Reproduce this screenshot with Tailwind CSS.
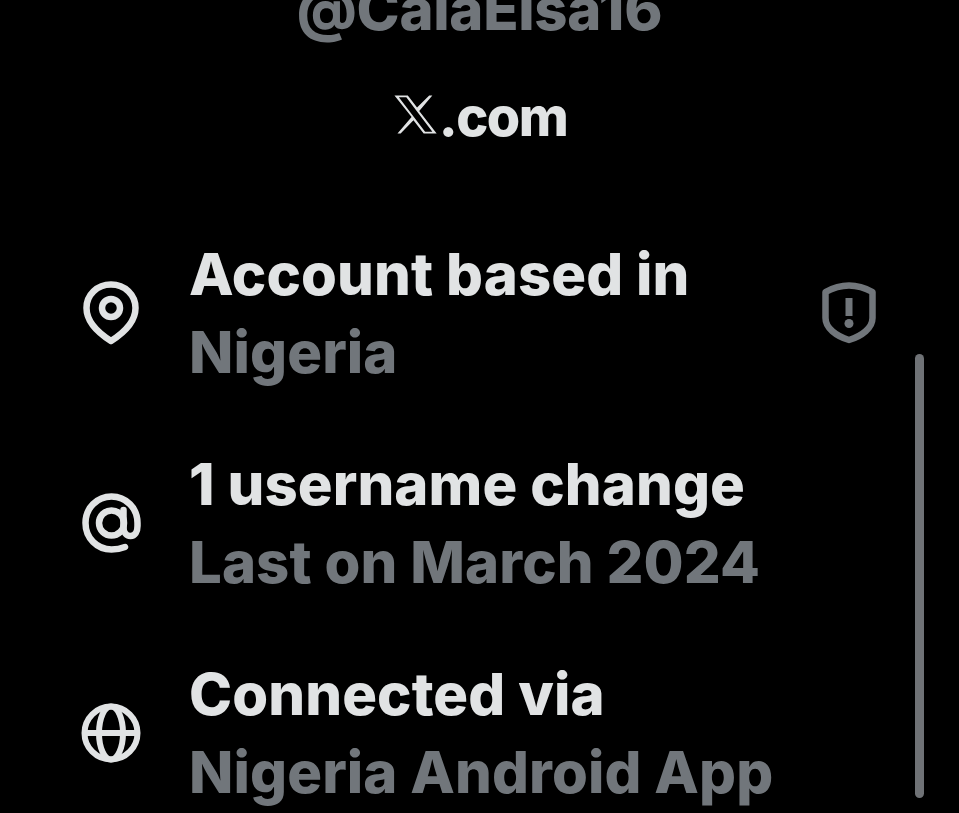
<!DOCTYPE html>
<html><head><meta charset="utf-8"><script src="https://cdn.jsdelivr.net/npm/@tailwindcss/browser@4"></script></head>
<body class="bg-black">
<main class="relative w-[959px] h-[813px] overflow-hidden bg-black font-['Inter','Liberation_Sans',sans-serif] font-extrabold antialiased">
  <header class="flex flex-col items-center -mt-[30px]">
    <div class="text-[#71767b] text-[58px] leading-[78px] tracking-[-0.3px]">@CalaElsa16</div>
    <div class="flex items-center mt-[38px] h-[60px] text-[#e1e3e4] text-[54px] tracking-[-1.5px]">
      <svg class="w-[47px] h-[47px] mt-[-3px]" viewBox="0 0 24 24" fill="currentColor" fill-rule="evenodd"><path d="M19 2.25h1.6l-6.7 7.95 8.9 11.55H16.170l-5.214-6.817L4.400 21.750H2.800l7.200-8.500L1.254 2.250H8.080l4.713 6.231zM3.500 3.200L16.900 20.800H20.600L7.300 3.200z"/></svg>
      <span>.com</span>
    </div>
  </header>
  <section class="flex flex-col gap-[54px] mt-[89px] pl-[80px] pr-[80px] text-[58px] leading-[78px] tracking-[0.1px]">
    <div class="flex items-center">
      <svg class="w-[62px] h-[70px] mr-[47px] shrink-0" viewBox="80 278 62 70" fill="none" stroke="#e1e3e4" stroke-width="6.5" stroke-linejoin="round"><path d="M111 284.5C97 284.5 86.5 295 86.5 308C86.5 323 100 334 111 341C122 334 135.500 323 135.500 308C135.500 295 125 284.500 111 284.500Z"/><circle cx="111" cy="308" r="9"/></svg>
      <div class="grow">
        <div class="text-[#e1e3e4]">Account based in</div>
        <div class="text-[#71767b]">Nigeria</div>
      </div>
      <svg class="w-[60px] h-[66px] shrink-0" viewBox="819 280 60 66" fill="none" stroke="#71767b" stroke-width="6.500" stroke-linejoin="round"><path d="M825.500 292C841 283.500 857 283.500 872.500 292V318C872.500 328 862 336 849 340C836 336 825.500 328 825.500 318Z"/><rect x="845.500" y="298" width="7" height="18" fill="#71767b" stroke="none"/><circle cx="849" cy="323.500" r="4.500" fill="#71767b" stroke="none"/></svg>
    </div>
    <div class="flex items-center">
      <svg class="w-[62px] h-[64px] mr-[47px] shrink-0" viewBox="80 491 62 64" fill="none" stroke="#e1e3e4" stroke-width="6.500" stroke-linecap="round"><path d="M125 547C120 549 116 549.500 111.500 549.500C97 549.500 85.500 538 85.500 523C85.500 508 97 496.500 111.500 496.500C126 496.500 137.500 508 137.500 523V526C137.500 532 135 536 130.500 536C126 536 123.500 532 123.500 527V510"/><circle cx="111.500" cy="523" r="12.500"/></svg>
      <div class="grow">
        <div class="text-[#e1e3e4]">1 username change</div>
        <div class="text-[#71767b]">Last on March 2024</div>
      </div>
    </div>
    <div class="flex items-center">
      <svg class="w-[62px] h-[62px] mr-[47px] shrink-0" viewBox="80 702 62 62" fill="none" stroke="#e1e3e4" stroke-width="6"><circle cx="111" cy="733" r="26.500"/><ellipse cx="111" cy="733" rx="12" ry="26.500"/><path d="M85 733H137"/></svg>
      <div class="grow">
        <div class="text-[#e1e3e4]">Connected via</div>
        <div class="text-[#71767b]">Nigeria Android App</div>
      </div>
    </div>
  </section>
  <div class="absolute left-[915px] top-[354px] w-[9px] h-[444px] rounded-full bg-[#6f7276]"></div>
</main>
</body></html>
